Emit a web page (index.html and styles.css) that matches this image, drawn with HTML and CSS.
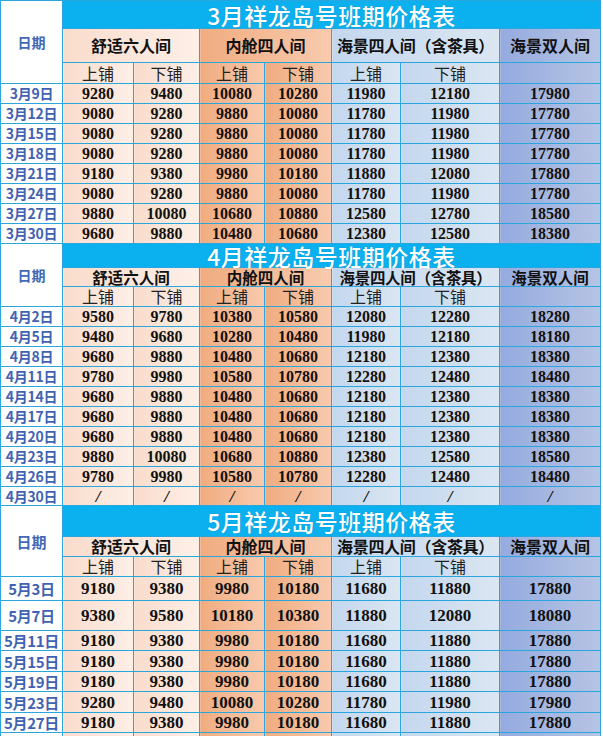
FILE: index.html
```html
<!DOCTYPE html>
<html lang="zh">
<head>
<meta charset="utf-8">
<link rel="stylesheet" href="styles.css">
</head>
<body>
<table class="price">
<colgroup>
<col class="w0"><col class="w1"><col class="w2"><col class="w3"><col class="w4"><col class="w5"><col class="w6"><col class="w7">
</colgroup>
<tbody>
<tr class="r28"><td class="date-h" rowspan="3">日期</td><td class="title" colspan="7">3月祥龙岛号班期价格表</td></tr>
<tr class="r34 hd"><td class="s" colspan="2">舒适六人间</td><td class="n" colspan="2">内舱四人间</td><td class="h4" colspan="2">海景四人间（含茶具）</td><td class="d">海景双人间</td></tr>
<tr class="r21 sub"><td class="s">上铺</td><td class="s">下铺</td><td class="n">上铺</td><td class="n">下铺</td><td class="h4">上铺</td><td class="h4">下铺</td><td class="d"></td></tr>
<tr class="r20 row"><td class="dt">3月9日</td><td class="s">9280</td><td class="s">9480</td><td class="n">10080</td><td class="n">10280</td><td class="h4">11980</td><td class="h4">12180</td><td class="d">17980</td></tr>
<tr class="r20 row"><td class="dt">3月12日</td><td class="s">9080</td><td class="s">9280</td><td class="n">9880</td><td class="n">10080</td><td class="h4">11780</td><td class="h4">11980</td><td class="d">17780</td></tr>
<tr class="r20 row"><td class="dt">3月15日</td><td class="s">9080</td><td class="s">9280</td><td class="n">9880</td><td class="n">10080</td><td class="h4">11780</td><td class="h4">11980</td><td class="d">17780</td></tr>
<tr class="r20 row"><td class="dt">3月18日</td><td class="s">9080</td><td class="s">9280</td><td class="n">9880</td><td class="n">10080</td><td class="h4">11780</td><td class="h4">11980</td><td class="d">17780</td></tr>
<tr class="r20 row"><td class="dt">3月21日</td><td class="s">9180</td><td class="s">9380</td><td class="n">9980</td><td class="n">10180</td><td class="h4">11880</td><td class="h4">12080</td><td class="d">17880</td></tr>
<tr class="r20 row"><td class="dt">3月24日</td><td class="s">9080</td><td class="s">9280</td><td class="n">9880</td><td class="n">10080</td><td class="h4">11780</td><td class="h4">11980</td><td class="d">17780</td></tr>
<tr class="r20 row"><td class="dt">3月27日</td><td class="s">9880</td><td class="s">10080</td><td class="n">10680</td><td class="n">10880</td><td class="h4">12580</td><td class="h4">12780</td><td class="d">18580</td></tr>
<tr class="r20 row"><td class="dt">3月30日</td><td class="s">9680</td><td class="s">9880</td><td class="n">10480</td><td class="n">10680</td><td class="h4">12380</td><td class="h4">12580</td><td class="d">18380</td></tr>

<tr class="r24"><td class="date-h" rowspan="3">日期</td><td class="title" colspan="7">4月祥龙岛号班期价格表</td></tr>
<tr class="r19 hd tight"><td class="s" colspan="2">舒适六人间</td><td class="n" colspan="2">内舱四人间</td><td class="h4" colspan="2">海景四人间（含茶具）</td><td class="d">海景双人间</td></tr>
<tr class="r20 sub"><td class="s">上铺</td><td class="s">下铺</td><td class="n">上铺</td><td class="n">下铺</td><td class="h4">上铺</td><td class="h4">下铺</td><td class="d"></td></tr>
<tr class="r20 row"><td class="dt">4月2日</td><td class="s">9580</td><td class="s">9780</td><td class="n">10380</td><td class="n">10580</td><td class="h4">12080</td><td class="h4">12280</td><td class="d">18280</td></tr>
<tr class="r20 row"><td class="dt">4月5日</td><td class="s">9480</td><td class="s">9680</td><td class="n">10280</td><td class="n">10480</td><td class="h4">11980</td><td class="h4">12180</td><td class="d">18180</td></tr>
<tr class="r20 row"><td class="dt">4月8日</td><td class="s">9680</td><td class="s">9880</td><td class="n">10480</td><td class="n">10680</td><td class="h4">12180</td><td class="h4">12380</td><td class="d">18380</td></tr>
<tr class="r20 row"><td class="dt">4月11日</td><td class="s">9780</td><td class="s">9980</td><td class="n">10580</td><td class="n">10780</td><td class="h4">12280</td><td class="h4">12480</td><td class="d">18480</td></tr>
<tr class="r20 row"><td class="dt">4月14日</td><td class="s">9680</td><td class="s">9880</td><td class="n">10480</td><td class="n">10680</td><td class="h4">12180</td><td class="h4">12380</td><td class="d">18380</td></tr>
<tr class="r20 row"><td class="dt">4月17日</td><td class="s">9680</td><td class="s">9880</td><td class="n">10480</td><td class="n">10680</td><td class="h4">12180</td><td class="h4">12380</td><td class="d">18380</td></tr>
<tr class="r20 row"><td class="dt">4月20日</td><td class="s">9680</td><td class="s">9880</td><td class="n">10480</td><td class="n">10680</td><td class="h4">12180</td><td class="h4">12380</td><td class="d">18380</td></tr>
<tr class="r20 row"><td class="dt">4月23日</td><td class="s">9880</td><td class="s">10080</td><td class="n">10680</td><td class="n">10880</td><td class="h4">12380</td><td class="h4">12580</td><td class="d">18580</td></tr>
<tr class="r20 row"><td class="dt">4月26日</td><td class="s">9780</td><td class="s">9980</td><td class="n">10580</td><td class="n">10780</td><td class="h4">12280</td><td class="h4">12480</td><td class="d">18480</td></tr>
<tr class="r19 row slash"><td class="dt">4月30日</td><td class="s">/</td><td class="s">/</td><td class="n">/</td><td class="n">/</td><td class="h4">/</td><td class="h4">/</td><td class="d">/</td></tr>

<tr class="r31"><td class="date-h big" rowspan="3">日期</td><td class="title" colspan="7">5月祥龙岛号班期价格表</td></tr>
<tr class="r20 hd"><td class="s" colspan="2">舒适六人间</td><td class="n" colspan="2">内舱四人间</td><td class="h4" colspan="2">海景四人间（含茶具）</td><td class="d">海景双人间</td></tr>
<tr class="r20 sub"><td class="s">上铺</td><td class="s">下铺</td><td class="n">上铺</td><td class="n">下铺</td><td class="h4">上铺</td><td class="h4">下铺</td><td class="d"></td></tr>
<tr class="r24 row lg"><td class="dt">5月3日</td><td class="s">9180</td><td class="s">9380</td><td class="n">9980</td><td class="n">10180</td><td class="h4">11680</td><td class="h4">11880</td><td class="d">17880</td></tr>
<tr class="r30 row lg"><td class="dt">5月7日</td><td class="s">9380</td><td class="s">9580</td><td class="n">10180</td><td class="n">10380</td><td class="h4">11880</td><td class="h4">12080</td><td class="d">18080</td></tr>
<tr class="r20 row lg"><td class="dt">5月11日</td><td class="s">9180</td><td class="s">9380</td><td class="n">9980</td><td class="n">10180</td><td class="h4">11680</td><td class="h4">11880</td><td class="d">17880</td></tr>
<tr class="r21 row lg"><td class="dt">5月15日</td><td class="s">9180</td><td class="s">9380</td><td class="n">9980</td><td class="n">10180</td><td class="h4">11680</td><td class="h4">11880</td><td class="d">17880</td></tr>
<tr class="r20 row lg"><td class="dt">5月19日</td><td class="s">9180</td><td class="s">9380</td><td class="n">9980</td><td class="n">10180</td><td class="h4">11680</td><td class="h4">11880</td><td class="d">17880</td></tr>
<tr class="r21 row lg"><td class="dt">5月23日</td><td class="s">9280</td><td class="s">9480</td><td class="n">10080</td><td class="n">10280</td><td class="h4">11780</td><td class="h4">11980</td><td class="d">17980</td></tr>
<tr class="r20 row lg"><td class="dt">5月27日</td><td class="s">9180</td><td class="s">9380</td><td class="n">9980</td><td class="n">10180</td><td class="h4">11680</td><td class="h4">11880</td><td class="d">17880</td></tr>
<tr class="r20 row lg"><td class="dt">5月31日</td><td class="s">9180</td><td class="s">9380</td><td class="n">9980</td><td class="n">10180</td><td class="h4">11680</td><td class="h4">11880</td><td class="d">17880</td></tr>
</tbody>
</table>
</body>
</html>
```
FILE: styles.css
```css
html, body {
  margin: 0;
  padding: 0;
  background: #ffffff;
}

.price {
  border-collapse: collapse;
  table-layout: fixed;
  width: 601px;
  font-family: "Noto Sans CJK SC", sans-serif;
}

.w0 { width: 62px; }
.w1 { width: 71px; }
.w2 { width: 66px; }
.w3 { width: 65px; }
.w4 { width: 67px; }
.w5 { width: 69px; }
.w6 { width: 99px; }
.w7 { width: 101px; }

.price td {
  border: 1px solid #29a6de;
  padding: 0;
  text-align: center;
  vertical-align: middle;
  line-height: 17px;
  white-space: nowrap;
}

.r19 { height: 19px; }
.r20 { height: 20px; }
.r21 { height: 21px; }
.r24 { height: 24px; }
.r28 { height: 28px; }
.r30 { height: 30px; }
.r31 { height: 31px; }
.r34 { height: 34px; }

.price td.title {
  background: #0bb0ee;
  color: #ffffff;
  font-size: 23px;
  line-height: 22px;
  font-weight: 500;
  letter-spacing: 0.5px;
  text-shadow: 0 0 1px rgba(0, 80, 130, 0.35);
}

.price td.date-h {
  background: #ffffff;
  color: #4368b6;
  font-size: 14px;
  font-weight: 700;
}
.price td.date-h.big { font-size: 15px; }

.price td.dt {
  background: #ffffff;
  color: #3f63b3;
  font-size: 14px;
  font-weight: 700;
  letter-spacing: -0.3px;
}
.lg td.dt { font-size: 15px; }

.s { background: linear-gradient(to right, #f9dccc, #fdefe7); }
.n { background: linear-gradient(to right, #f0ac80, #f8caae); }
.h4 { background: linear-gradient(to right, #c3d7ee, #dbe6f1); }
.d { background: linear-gradient(to right, #95abdf, #b6c4e4); }

.hd td {
  color: #111111;
  font-size: 16px;
  font-weight: 700;
}
.hd td.h4 { letter-spacing: -0.3px; }
.hd.tight td { font-size: 15.5px; line-height: 16px; }

.sub td {
  color: #222222;
  font-size: 16px;
  font-weight: 400;
}

.row td.s, .row td.n, .row td.h4, .row td.d {
  font-family: "Liberation Serif", serif;
  font-weight: 700;
  font-size: 16px;
  color: #111111;
}
.lg td.s, .lg td.n, .lg td.h4, .lg td.d { font-size: 17px; }
.slash td.s, .slash td.n, .slash td.h4, .slash td.d { font-size: 17px; font-style: italic; }
```
